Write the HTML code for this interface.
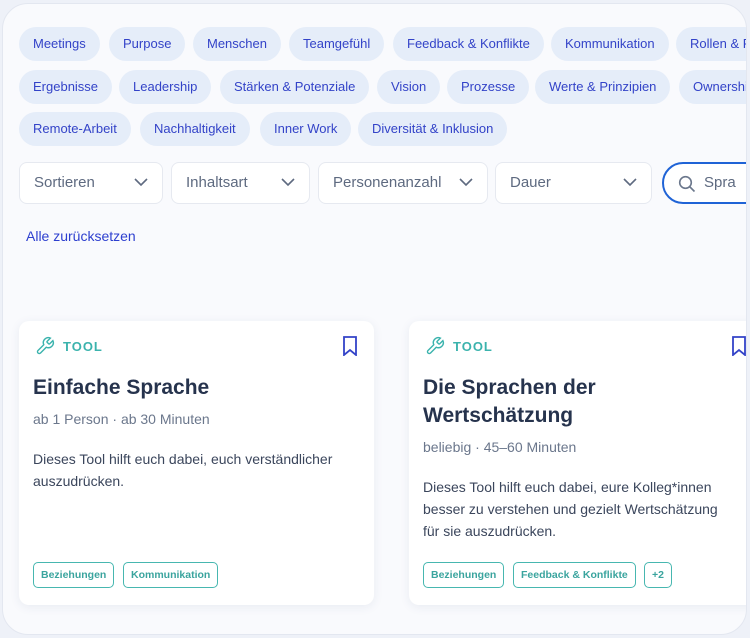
<!DOCTYPE html><html><head><style>
*{box-sizing:border-box;margin:0;padding:0}
body{width:750px;height:638px;overflow:hidden;background:#eef1f8;font-family:"Liberation Sans",sans-serif;position:relative}
.frame{position:absolute;left:2px;top:3px;width:745px;height:632px;background:#f9fafd;border:1px solid #e3e7f0;border-radius:26px;overflow:hidden}
.chip{position:absolute;height:34px;border-radius:17px;background:#e5edf9;color:#3343c8;font-size:13px;line-height:34px;padding:0 14px;white-space:nowrap}
.sel{position:absolute;top:158px;height:42px;background:#fff;border:1px solid #e6e9f0;border-radius:8px;color:#5e6a80;font-size:15px;line-height:40px;padding-left:14px}
.sel svg{position:absolute;right:14px;top:14px}
.card{position:absolute;top:317px;height:284px;background:#fff;border-radius:10px;box-shadow:0 2px 10px rgba(40,60,110,.08)}
.tool{position:absolute;left:16px;top:15px;color:#3bb3ad;font-size:13px;font-weight:bold;letter-spacing:1px;display:flex;align-items:center;gap:8px}
.bm{position:absolute;top:15px}
h2{position:absolute;left:14px;top:53px;font-size:21px;color:#26334d;font-weight:bold;line-height:28px}
.meta{position:absolute;left:14px;color:#6b778c;font-size:14px}
.desc{position:absolute;left:14px;color:#3b465c;font-size:14px;line-height:22px}
.tag{position:absolute;top:241px;height:26px;border:1px solid #47b7b0;border-radius:5px;color:#3aa49e;font-size:10.5px;font-weight:bold;line-height:24px;padding:0 7px}
</style></head><body><div class="frame">
<div class="chip" style="left:16px;top:23px">Meetings</div>
<div class="chip" style="left:106px;top:23px">Purpose</div>
<div class="chip" style="left:190px;top:23px">Menschen</div>
<div class="chip" style="left:286px;top:23px">Teamgefühl</div>
<div class="chip" style="left:390px;top:23px">Feedback &amp; Konflikte</div>
<div class="chip" style="left:548px;top:23px">Kommunikation</div>
<div class="chip" style="left:673px;top:23px">Rollen &amp; R</div>
<div class="chip" style="left:16px;top:66px">Ergebnisse</div>
<div class="chip" style="left:116px;top:66px">Leadership</div>
<div class="chip" style="left:217px;top:66px">Stärken &amp; Potenziale</div>
<div class="chip" style="left:374px;top:66px">Vision</div>
<div class="chip" style="left:444px;top:66px">Prozesse</div>
<div class="chip" style="left:532px;top:66px">Werte &amp; Prinzipien</div>
<div class="chip" style="left:676px;top:66px">Ownership</div>
<div class="chip" style="left:16px;top:108px">Remote-Arbeit</div>
<div class="chip" style="left:137px;top:108px">Nachhaltigkeit</div>
<div class="chip" style="left:257px;top:108px">Inner Work</div>
<div class="chip" style="left:355px;top:108px">Diversität &amp; Inklusion</div>
<div class="sel" style="left:16px;width:144px">Sortieren<svg width="14" height="10"><path d="M1 2l6 6 6-6" stroke="#5e6a80" stroke-width="1.6" fill="none"/></svg></div>
<div class="sel" style="left:168px;width:139px">Inhaltsart<svg width="14" height="10"><path d="M1 2l6 6 6-6" stroke="#5e6a80" stroke-width="1.6" fill="none"/></svg></div>
<div class="sel" style="left:315px;width:170px">Personenanzahl<svg width="14" height="10"><path d="M1 2l6 6 6-6" stroke="#5e6a80" stroke-width="1.6" fill="none"/></svg></div>
<div class="sel" style="left:492px;width:157px">Dauer<svg width="14" height="10"><path d="M1 2l6 6 6-6" stroke="#5e6a80" stroke-width="1.6" fill="none"/></svg></div>
<div class="sel" style="left:659px;width:120px;border:2px solid #1f63d6;border-radius:21px;padding-left:40px;line-height:38px">Spra<svg style="left:14px;top:11px;right:auto" width="18" height="18"><circle cx="7.5" cy="7.5" r="5.8" stroke="#6b778c" stroke-width="1.6" fill="none"/><path d="M12 12l4.5 4.5" stroke="#6b778c" stroke-width="1.6"/></svg></div>
<div style="position:absolute;left:23px;top:224px;color:#2d3fcf;font-size:14px">Alle zurücksetzen</div>
<div class="card" style="left:16px;width:355px">
<div class="tool"><svg width="20" height="20" viewBox="0 0 24 24"><path d="M14.7 6.3a1 1 0 000 1.4l1.6 1.6a1 1 0 001.4 0l3.77-3.77a6 6 0 01-7.940 7.94l-6.91 6.91a2.12 2.12 0 01-3-3l6.91-6.91a6 6 0 017.94-7.94l-3.76 3.76z" stroke="#3bb3ad" stroke-width="1.7" fill="none"/></svg>TOOL</div>
<svg class="bm" style="right:16px" width="16" height="20"><path d="M2 1h12v18l-6-5-6 5z" stroke="#3343c8" stroke-width="1.8" fill="none"/></svg>
<h2>Einfache Sprache</h2>
<div class="meta" style="top:90px">ab 1 Person · ab 30 Minuten</div>
<div class="desc" style="top:127px">Dieses Tool hilft euch dabei, euch verständlicher<br>auszudrücken.</div>
<div class="tag" style="left:14px">Beziehungen</div>
<div class="tag" style="left:104px">Kommunikation</div>
</div>
<div class="card" style="left:406px;width:360px">
<div class="tool"><svg width="20" height="20" viewBox="0 0 24 24"><path d="M14.7 6.3a1 1 0 000 1.4l1.6 1.6a1 1 0 001.4 0l3.77-3.77a6 6 0 01-7.94 7.94l-6.91 6.91a2.12 2.12 0 01-3-3l6.91-6.91a6 6 0 017.94-7.94l-3.76 3.76z" stroke="#3bb3ad" stroke-width="1.7" fill="none"/></svg>TOOL</div>
<svg class="bm" style="left:322px" width="16" height="20"><path d="M2 1h12v18l-6-5-6 5z" stroke="#3343c8" stroke-width="1.8" fill="none"/></svg>
<h2>Die Sprachen der<br>Wertschätzung</h2>
<div class="meta" style="top:118px">beliebig · 45–60 Minuten</div>
<div class="desc" style="top:155px">Dieses Tool hilft euch dabei, eure Kolleg*innen<br>besser zu verstehen und gezielt Wertschätzung<br>für sie auszudrücken.</div>
<div class="tag" style="left:14px">Beziehungen</div>
<div class="tag" style="left:104px">Feedback &amp; Konflikte</div>
<div class="tag" style="left:235px">+2</div>
</div>
</div></body></html>
